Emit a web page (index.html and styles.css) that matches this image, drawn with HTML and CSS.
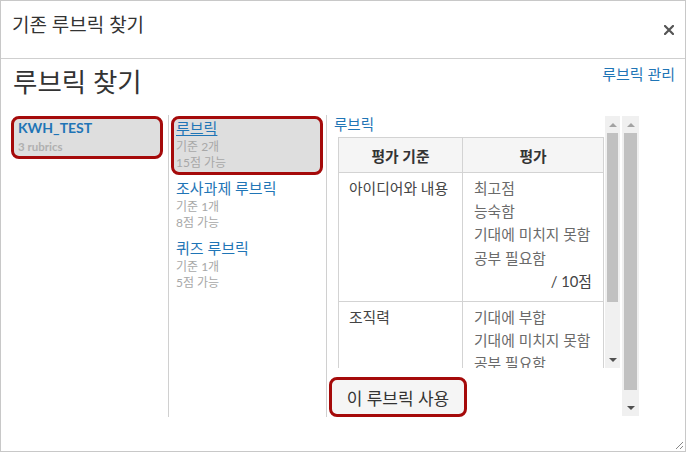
FILE: index.html
```html
<!DOCTYPE html>
<html lang="ko">
<head>
    <meta charset="UTF-8">
    <meta name="viewport" content="width=device-width, initial-scale=1.0">
    <title>기존 루브릭 찾기</title>
    <link rel="stylesheet" href="styles.css">
</head>
<body>

<div class="dialog">
    <!-- Header -->
    <div class="dialog-header">
        <span class="dialog-title">기존 루브릭 찾기</span>
        <button class="close-btn" aria-label="닫기">
            <svg width="10" height="10" viewBox="0 0 10 10">
                <path d="M1 1 L9 9 M9 1 L1 9" stroke="#555" stroke-width="2.2" stroke-linecap="square"/>
            </svg>
        </button>
    </div>

    <div class="dialog-body">
        <div class="body-top">
            <h1>루브릭 찾기</h1>
            <a href="#" class="manage-link">루브릭 관리</a>
        </div>

        <div class="columns">
            <!-- Courses -->
            <div class="col col-courses">
                <div class="item selected">
                    <a href="#" class="item-title course-title">KWH_TEST</a>
                    <div class="item-meta course-meta">3 rubrics</div>
                </div>
            </div>

            <!-- Rubrics -->
            <div class="col col-rubrics">
                <div class="item selected">
                    <a href="#" class="item-title underline">루브릭</a>
                    <div class="item-meta">기준 2개</div>
                    <div class="item-meta">15점 가능</div>
                </div>
                <div class="item">
                    <a href="#" class="item-title">조사과제 루브릭</a>
                    <div class="item-meta">기준 1개</div>
                    <div class="item-meta">8점 가능</div>
                </div>
                <div class="item">
                    <a href="#" class="item-title">퀴즈 루브릭</a>
                    <div class="item-meta">기준 1개</div>
                    <div class="item-meta">5점 가능</div>
                </div>
            </div>

            <!-- Preview -->
            <div class="col col-preview">
                <div class="preview-main">
                    <div class="preview-scroll">
                        <div class="preview-content">
                            <a href="#" class="preview-title">루브릭</a>
                            <table class="rubric-table">
                                <thead>
                                    <tr>
                                        <th class="criteria-col">평가 기준</th>
                                        <th>평가</th>
                                    </tr>
                                </thead>
                                <tbody>
                                    <tr>
                                        <td class="criteria">아이디어와 내용</td>
                                        <td class="ratings">
                                            <div>최고점</div>
                                            <div>능숙함</div>
                                            <div>기대에 미치지 못함</div>
                                            <div>공부 필요함</div>
                                            <div class="points">/ 10점</div>
                                        </td>
                                    </tr>
                                    <tr>
                                        <td class="criteria">조직력</td>
                                        <td class="ratings">
                                            <div>기대에 부합</div>
                                            <div>기대에 미치지 못함</div>
                                            <div>공부 필요함</div>
                                            <div class="points">/ 5점</div>
                                        </td>
                                    </tr>
                                </tbody>
                            </table>
                        </div>
                        <div class="scrollbar scrollbar-inner">
                            <div class="sb-arrow"><span class="tri-up"></span></div>
                            <div class="sb-thumb"></div>
                            <div class="sb-rest"></div>
                            <div class="sb-arrow"><span class="tri-down"></span></div>
                        </div>
                    </div>
                    <button class="use-btn">이 루브릭 사용</button>
                </div>
                <div class="scrollbar scrollbar-outer">
                    <div class="sb-arrow"><span class="tri-up"></span></div>
                    <div class="sb-thumb"></div>
                    <div class="sb-rest"></div>
                    <div class="sb-arrow"><span class="tri-down"></span></div>
                </div>
            </div>
        </div>
    </div>

    <!-- Resize grip -->
    <svg class="resize-grip" width="9" height="9" viewBox="0 0 9 9">
        <path d="M8 1 L1 8 M8 5 L5 8" stroke="#888" stroke-width="1"/>
    </svg>
</div>

</body>
</html>
```

FILE: styles.css
```css
/* General Styles */
body {
    margin: 0;
    font-family: 'Lato', 'Noto Sans CJK KR', sans-serif;
    color: #333;
    background-color: #fff;
}

a {
    color: #1f75b6;
    text-decoration: none;
}

/* Dialog */
.dialog {
    position: relative;
    width: 686px;
    height: 452px;
    box-sizing: border-box;
    border: 1px solid #c8c8c8;
    background-color: #fff;
}

.dialog-header {
    display: flex;
    align-items: flex-start;
    height: 58px;
    box-sizing: border-box;
    border-bottom: 1px solid #cfcfcf;
}

.dialog-title {
    padding: 12px 0 0 11px;
    font-size: 19px;
    line-height: 24px;
    color: #333;
}

.close-btn {
    margin: 24px 11px 0 auto;
    padding: 0;
    border: none;
    background: none;
    width: 10px;
    height: 10px;
    cursor: pointer;
}

.close-btn svg {
    display: block;
}

/* Body */
.dialog-body {
    padding: 6px 10px 0 9px;
}

.body-top {
    display: flex;
    justify-content: space-between;
    align-items: flex-start;
}

.body-top h1 {
    margin: 2px 0 0 3px;
    font-size: 26.5px;
    line-height: 30px;
    font-weight: normal;
    color: #333;
}

.manage-link {
    font-size: 15px;
    line-height: 18px;
}

/* Columns */
.columns {
    display: flex;
    margin-top: 18px;
    height: 302px;
}

.col {
    box-sizing: border-box;
}

.col-courses {
    width: 159px;
    padding: 1px 5px 0 1px;
    border-right: 1px solid #d0d0d0;
}

.col-rubrics {
    width: 158px;
    padding: 1px 3px 0 2px;
    border-right: 1px solid #d0d0d0;
}

.col-preview {
    display: flex;
    align-items: flex-start;
}

/* List Items */
.item {
    border: 3px solid transparent;
    border-radius: 8px;
    padding: 0 2px 1px 2px;
    margin-bottom: 1px;
}

.item.selected {
    border-color: #a50a0a;
    background-color: #dedede;
}

.col-courses .item {
    padding-left: 4px;
}

.item-title {
    display: block;
    font-size: 15px;
    line-height: 18px;
    margin-bottom: 2px;
}

.item-title.underline {
    text-decoration: underline;
}

.course-title {
    font-weight: bold;
    font-size: 14px;
}

.item-meta {
    font-size: 12px;
    line-height: 16px;
    color: #a8a8a8;
}

.course-meta {
    font-weight: bold;
    font-size: 11.5px;
    color: #b0b0b0;
}

/* Preview */
.preview-main {
    width: 294px;
}

.preview-scroll {
    display: flex;
    margin-top: 1px;
    height: 252px;
}

.preview-content {
    width: 277px;
    height: 252px;
    overflow: hidden;
    padding-left: 7px;
    box-sizing: border-box;
}

.preview-title {
    display: block;
    font-size: 14.5px;
    line-height: 18px;
    margin-bottom: 3px;
}

.rubric-table {
    margin-left: 4px;
    width: 266px;
    border-collapse: collapse;
    font-size: 14.8px;
}

.rubric-table th,
.rubric-table td {
    border: 1px solid #d3d3d3;
}

.rubric-table th {
    height: 34px;
    padding: 0;
    background-color: #f5f5f5;
    font-weight: bold;
    color: #333;
    text-align: center;
}

.rubric-table .criteria-col {
    width: 123px;
}

.rubric-table td {
    vertical-align: top;
    line-height: 23.2px;
}

.criteria {
    padding: 4px 6px 8px 10px;
    color: #444;
}

.ratings {
    padding: 4px 11px 8px 11px;
    color: #6a6a6a;
}

.points {
    text-align: right;
    color: #444;
}

/* Fake Scrollbars */
.scrollbar {
    display: flex;
    flex-direction: column;
    background-color: #f0f0f0;
    box-sizing: border-box;
}

.scrollbar-inner {
    width: 15px;
    height: 252px;
    margin-left: 1px;
}

.scrollbar-outer {
    width: 17px;
    height: 300px;
    margin: 1px 0 0 1px;
}

.sb-arrow {
    height: 17px;
    display: flex;
    align-items: center;
    justify-content: center;
}

.sb-thumb {
    margin: 0 2px;
    background-color: #c1c1c1;
}

.scrollbar-inner .sb-thumb {
    height: 169px;
}

.scrollbar-outer .sb-thumb {
    height: 257px;
}

.sb-rest {
    flex: 1;
}

.tri-up {
    width: 0;
    height: 0;
    border-left: 4px solid transparent;
    border-right: 4px solid transparent;
    border-bottom: 4px solid #a3a3a3;
}

.tri-down {
    width: 0;
    height: 0;
    border-left: 4px solid transparent;
    border-right: 4px solid transparent;
    border-top: 4px solid #505050;
}

/* Use Button */
.use-btn {
    display: block;
    margin: 9px 0 0 2px;
    width: 138px;
    height: 40px;
    padding: 0;
    border: 3px solid #a50a0a;
    border-radius: 8px;
    background-color: #f5f5f5;
    font-family: 'Lato', 'Noto Sans CJK KR', sans-serif;
    font-size: 17px;
    color: #333;
    cursor: pointer;
}

/* Resize Grip */
.resize-grip {
    position: absolute;
    right: 1px;
    bottom: 1px;
}
```
